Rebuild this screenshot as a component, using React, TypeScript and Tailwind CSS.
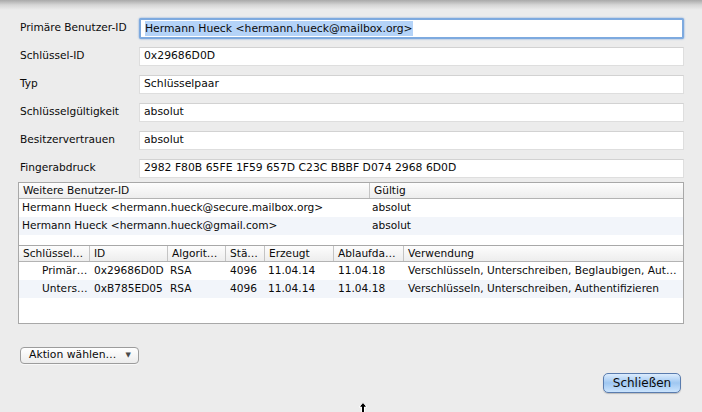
import React from "react";

const font = { fontFamily: '"DejaVu Sans", "Liberation Sans", sans-serif' };

function FieldRow({ label, value, focused }: { label: string; value: string; focused?: boolean }) {
  return (
    <div className="flex h-[28px] items-center">
      <div className="w-[119px] shrink-0 text-[10.6px] text-[#0a0a0a]">{label}</div>
      {focused ? (
        <div className="flex h-[21px] w-[545px] items-center rounded-[2px] border-2 border-[#7eaadf] bg-white pl-[4px] shadow-[0_0_2px_#6b9ad6]">
          <span className="bg-[#b4d3f8] text-[10.8px] leading-[15px] text-[#0a0a0a]">{value}</span>
        </div>
      ) : (
        <div className="flex h-[19px] w-[545px] items-center border border-[#dedede] border-t-[#d2d2d2] bg-white pl-[4px] text-[10.8px] text-[#0a0a0a]">
          {value}
        </div>
      )}
    </div>
  );
}

function HeaderCell({ w, children, first }: { w?: string; children: React.ReactNode; first?: boolean }) {
  return (
    <div
      className={`${w ?? "flex-1"} flex h-full shrink-0 items-center overflow-hidden whitespace-nowrap pl-[4px] ${
        first ? "" : "border-l border-[#c4c4c4]"
      }`}
    >
      {children}
    </div>
  );
}

function Cell({ w, children, pl }: { w?: string; children: React.ReactNode; pl?: string }) {
  return (
    <div className={`${w ?? "flex-1"} ${pl ?? "pl-[4px]"} shrink-0 overflow-hidden whitespace-nowrap`}>{children}</div>
  );
}

function KeyRow({ bg, cells }: { bg: string; cells: string[] }) {
  return (
    <div className={`flex h-[18px] items-center ${bg}`}>
      <Cell w="w-[71px]" pl="pl-[23px]">{cells[0]}</Cell>
      <Cell w="w-[78px]">{cells[1]}</Cell>
      <Cell w="w-[58px]" pl="pl-[2px]">{cells[2]}</Cell>
      <Cell w="w-[39px]">{cells[3]}</Cell>
      <Cell w="w-[69px]" pl="pl-[3px]">{cells[4]}</Cell>
      <Cell w="w-[70px]">{cells[5]}</Cell>
      <Cell>{cells[6]}</Cell>
    </div>
  );
}

export default function App() {
  return (
    <div
      className="relative h-[412px] w-[702px] overflow-hidden bg-[#ececec] text-[10.6px] text-[#0a0a0a]"
      style={font}
    >
      <div className="absolute left-0 top-0 h-[10px] w-full bg-gradient-to-b from-[#a9a9a9] via-[#d6d6d6] to-[#ececec]" />
      <div className="relative flex flex-col pt-[14px]">
        <div className="flex flex-col pl-[20px]">
          <FieldRow label="Primäre Benutzer-ID" value="Hermann Hueck <hermann.hueck@mailbox.org>" focused />
          <FieldRow label="Schlüssel-ID" value="0x29686D0D" />
          <FieldRow label="Typ" value="Schlüsselpaar" />
          <FieldRow label="Schlüsselgültigkeit" value="absolut" />
          <FieldRow label="Besitzervertrauen" value="absolut" />
          <FieldRow label="Fingerabdruck" value="2982 F80B 65FE 1F59 657D C23C BBBF D074 2968 6D0D" />
        </div>

        {/* Tables */}
        <div className="ml-[18px] flex w-[666px] flex-col border border-[#a8a8a8] bg-white">
          {/* Table 1 */}
          <div className="flex h-[62px] flex-col">
            <div className="flex h-[16px] items-center border-b border-[#b3b3b3] bg-gradient-to-b from-[#fdfdfd] to-[#ededed]">
              <HeaderCell w="w-[350px]" first>
                Weitere Benutzer-ID
              </HeaderCell>
              <HeaderCell>Gültig</HeaderCell>
            </div>
            <div className="flex h-[18px] items-center bg-white">
              <div className="w-[350px] pl-[3px]">Hermann Hueck &lt;hermann.hueck@secure.mailbox.org&gt;</div>
              <div className="pl-[3px]">absolut</div>
            </div>
            <div className="flex h-[18px] items-center bg-[#f2f5fa]">
              <div className="w-[350px] pl-[3px]">Hermann Hueck &lt;hermann.hueck@gmail.com&gt;</div>
              <div className="pl-[3px]">absolut</div>
            </div>
          </div>

          {/* Table 2 */}
          <div className="flex h-[78px] flex-col border-t border-[#a8a8a8]">
            <div className="flex h-[16px] items-center border-b border-[#b3b3b3] bg-gradient-to-b from-[#fdfdfd] to-[#ededed]">
              <HeaderCell w="w-[70px]" first>Schlüssel…</HeaderCell>
              <HeaderCell w="w-[78px]">ID</HeaderCell>
              <HeaderCell w="w-[58px]">Algorit…</HeaderCell>
              <HeaderCell w="w-[39px]">Stä…</HeaderCell>
              <HeaderCell w="w-[69px]">Erzeugt</HeaderCell>
              <HeaderCell w="w-[70px]">Ablaufda…</HeaderCell>
              <HeaderCell>Verwendung</HeaderCell>
            </div>
            <KeyRow
              bg="bg-white"
              cells={["Primär…", "0x29686D0D", "RSA", "4096", "11.04.14", "11.04.18", "Verschlüsseln, Unterschreiben, Beglaubigen, Aut…"]}
            />
            <KeyRow
              bg="bg-[#f2f5fa]"
              cells={["Unters…", "0xB785ED05", "RSA", "4096", "11.04.14", "11.04.18", "Verschlüsseln, Unterschreiben, Authentifizieren"]}
            />
          </div>
        </div>

        {/* Action popup */}
        <div className="mt-[23px] pl-[20px]">
          <div className="flex h-[17px] w-[119px] items-center justify-between rounded-[4px] border border-[#9c9c9c] bg-gradient-to-b from-white to-[#ececec] pl-[8px] pr-[7px] shadow-[0_1px_0_#f8f8f8]">
            <span className="text-[10.8px]">Aktion wählen…</span>
            <span className="text-[7px] text-[#4a4a4a]">▼</span>
          </div>
        </div>

        {/* Close button */}
        <div className="mt-[9px] flex justify-end pr-[21px]">
          <div className="flex h-[20px] w-[78px] items-center justify-center rounded-[5px] border border-[#5a7cae] bg-gradient-to-b from-[#dcecfd] via-[#9fc7f1] to-[#cbe4fd] text-[12px] text-[#0a0a0a] shadow-[0_1px_1px_rgba(0,0,0,0.2)]">
            Schließen
          </div>
        </div>
      </div>

      {/* cursor */}
      <svg className="absolute left-[358px] top-[402px]" width="10" height="11" viewBox="0 0 10 11">
        <path d="M5 0.5 L9 5 L6.5 5 L6.5 10.5 L3.5 10.5 L3.5 5 L1 5 Z" fill="#000" stroke="#fff" strokeWidth="1" />
      </svg>
    </div>
  );
}
